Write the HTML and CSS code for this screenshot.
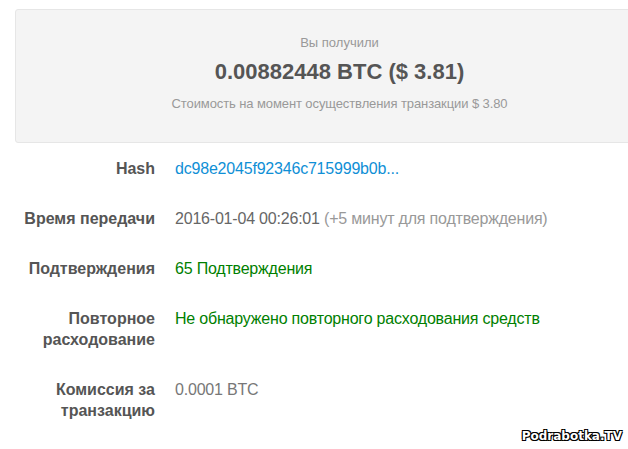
FILE: index.html
```html
<!doctype html>
<html lang="ru">
<head>
    <meta charset="utf-8">
    <title>Транзакция</title>
    <link rel="stylesheet" href="styles.css">
</head>
<body>
    <div class="summary">
        <div class="summary-label">Вы получили</div>
        <div class="summary-amount">0.00882448 BTC ($ 3.81)</div>
        <div class="summary-note">Стоимость на момент осуществления транзакции $ 3.80</div>
    </div>
    <div class="details">
        <div class="row">
            <div class="label">Hash</div>
            <div class="value"><a href="#">dc98e2045f92346c715999b0b...</a></div>
        </div>
        <div class="row">
            <div class="label">Время передачи</div>
            <div class="value">2016-01-04 00:26:01 <span class="muted">(+5 минут для подтверждения)</span></div>
        </div>
        <div class="row">
            <div class="label">Подтверждения</div>
            <div class="value ok">65 Подтверждения</div>
        </div>
        <div class="row">
            <div class="label">Повторное расходование</div>
            <div class="value ok">Не обнаружено повторного расходования средств</div>
        </div>
        <div class="row">
            <div class="label">Комиссия за транзакцию</div>
            <div class="value fee">0.0001 BTC</div>
        </div>
    </div>
    <div class="watermark">Podrabotka.TV</div>
</body>
</html>
```

FILE: styles.css
```css
body {
    margin: 0;
    padding: 9px 0 0 15px;
    font-family: "Liberation Sans", Arial, sans-serif;
    background: #fff;
    overflow: hidden;
}

.summary {
    width: 649px;
    height: 134px;
    box-sizing: border-box;
    padding-top: 23px;
    background-color: #f4f4f4;
    border: 1px solid #e6e6e6;
    border-radius: 3px;
    text-align: center;
}

.summary-label {
    font-size: 13px;
    line-height: 20px;
    color: #999;
}

.summary-amount {
    margin-top: 6px;
    font-size: 22px;
    font-weight: bold;
    line-height: 26px;
    color: #555;
}

.summary-note {
    margin-top: 9px;
    font-size: 13px;
    letter-spacing: -0.1px;
    line-height: 20px;
    color: #999;
}

.details {
    padding-top: 15px;
}

.row {
    display: flex;
    padding-bottom: 29px;
}

.label {
    flex: 0 0 160px;
    padding-right: 20px;
    box-sizing: border-box;
    text-align: right;
    font-size: 16px;
    font-weight: bold;
    line-height: 21px;
    color: #555;
}

.value {
    font-size: 16px;
    letter-spacing: -0.2px;
    line-height: 21px;
    color: #666;
}

.value a {
    color: #0f8fd6;
    text-decoration: none;
}

.muted {
    color: #999;
}

.ok {
    color: #008000;
}

.fee {
    color: #777;
}

.watermark {
    position: absolute;
    right: 6px;
    bottom: 6px;
    font-family: "DejaVu Sans", sans-serif;
    font-size: 12px;
    font-weight: bold;
    color: #fff;
    text-shadow: -1px -1px 0 #000, 1px -1px 0 #000, -1px 1px 0 #000, 1px 1px 0 #000;
}
```
